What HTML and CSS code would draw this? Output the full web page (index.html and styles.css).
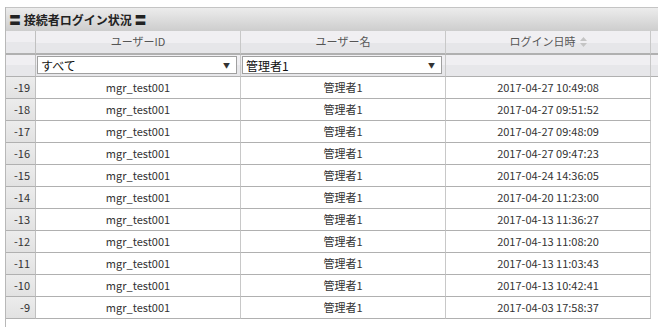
FILE: index.html
```html
<!DOCTYPE html>
<html lang="ja">
<head>
<meta charset="utf-8">
<title>接続者ログイン状況</title>
<link rel="stylesheet" href="styles.css">
</head>
<body>
<div class="panel">
  <div class="title">〓 接続者ログイン状況 〓</div>
  <div class="grid">
    <div class="hd num"></div>
    <div class="hd">ユーザーID</div>
    <div class="hd">ユーザー名</div>
    <div class="hd">ログイン日時<svg class="sort" width="7" height="10" viewBox="0 0 7 10"><path d="M3.5 0 L7 4 L0 4 Z" fill="#c4c4c4"/><path d="M0 6 L7 6 L3.5 10 Z" fill="#c4c4c4"/></svg></div>
    <div class="hd last"></div>

    <div class="ft num"></div>
    <div class="ft"><div class="sel"><span>すべて</span><span class="arr">▼</span></div></div>
    <div class="ft"><div class="sel"><span>管理者1</span><span class="arr">▼</span></div></div>
    <div class="ft"></div>
    <div class="ft last"></div>

    <div class="c num">-19</div><div class="c">mgr_test001</div><div class="c">管理者1</div><div class="c">2017-04-27 10:49:08</div><div class="c last"></div>
    <div class="c num">-18</div><div class="c">mgr_test001</div><div class="c">管理者1</div><div class="c">2017-04-27 09:51:52</div><div class="c last"></div>
    <div class="c num">-17</div><div class="c">mgr_test001</div><div class="c">管理者1</div><div class="c">2017-04-27 09:48:09</div><div class="c last"></div>
    <div class="c num">-16</div><div class="c">mgr_test001</div><div class="c">管理者1</div><div class="c">2017-04-27 09:47:23</div><div class="c last"></div>
    <div class="c num">-15</div><div class="c">mgr_test001</div><div class="c">管理者1</div><div class="c">2017-04-24 14:36:05</div><div class="c last"></div>
    <div class="c num">-14</div><div class="c">mgr_test001</div><div class="c">管理者1</div><div class="c">2017-04-20 11:23:00</div><div class="c last"></div>
    <div class="c num">-13</div><div class="c">mgr_test001</div><div class="c">管理者1</div><div class="c">2017-04-13 11:36:27</div><div class="c last"></div>
    <div class="c num">-12</div><div class="c">mgr_test001</div><div class="c">管理者1</div><div class="c">2017-04-13 11:08:20</div><div class="c last"></div>
    <div class="c num">-11</div><div class="c">mgr_test001</div><div class="c">管理者1</div><div class="c">2017-04-13 11:03:43</div><div class="c last"></div>
    <div class="c num">-10</div><div class="c">mgr_test001</div><div class="c">管理者1</div><div class="c">2017-04-13 10:42:41</div><div class="c last"></div>
    <div class="c num">-9</div><div class="c">mgr_test001</div><div class="c">管理者1</div><div class="c">2017-04-03 17:58:37</div><div class="c last"></div>
  </div>
</div>
</body>
</html>
```

FILE: styles.css
```css
html, body {
  margin: 0;
  padding: 0;
  background: #fff;
  height: 100%;
  overflow: hidden;
}
body {
  font-family: "Noto Sans CJK JP", "Noto Sans", sans-serif;
  color: #333;
  padding: 7px 0 0 5px;
  box-sizing: border-box;
}
.panel {
  border-left: 1px solid #b8b8b8;
  height: 100%;
}
.title {
  height: 24px;
  box-sizing: border-box;
  border-top: 1px solid #c4c4c4;
  background: linear-gradient(#ececec, #cdcdcd);
  font-size: 12px;
  font-weight: bold;
  color: #222;
  line-height: 23px;
  padding-left: 3px;
}
.grid {
  display: grid;
  grid-template-columns: 30px 205px 205px 205px 1fr;
}
.grid > div {
  border-right: 1px solid #c8c8c8;
  box-sizing: border-box;
  font-size: 11px;
  text-align: center;
}
.grid > .last {
  border-right: none;
}
.hd {
  height: 24px;
  line-height: 21px;
  color: #555;
  background: linear-gradient(#f0eff2 0, #f0eff2 55%, #e6e6e9 55%, #e6e6e9 100%);
  border-bottom: 2px solid #b0b0b0;
}
.sort {
  margin-left: 4px;
  vertical-align: -1px;
}
.ft {
  height: 22px;
  background: linear-gradient(#f0eff2 0, #f0eff2 50%, #e7e7ea 50%, #e7e7ea 100%);
  border-bottom: 1px solid #b0b0b0;
  padding: 1px 0 0 1px;
}
.sel {
  width: 200px;
  height: 18px;
  box-sizing: border-box;
  border: 1px solid #a0a0a0;
  background: #fff;
  display: flex;
  align-items: center;
  justify-content: space-between;
  padding: 0 6px 0 3px;
  font-size: 12px;
  color: #111;
  text-align: left;
}
.arr {
  font-size: 7px;
  color: #333;
}
.c {
  height: 22px;
  line-height: 21px;
  border-bottom: 1px solid #b0b0b0;
  background: #fff;
}
.grid > .c.last {
  border-bottom: none;
}
.grid > .num {
  text-align: right;
  padding-right: 5px;
  background: linear-gradient(#ececec, #e2e2e2);
  border-right-color: #c0c0c0;
}
.grid > .hd.num, .grid > .ft.num {
  background: linear-gradient(#f0eff2 0, #f0eff2 50%, #e7e7ea 50%, #e7e7ea 100%);
}
```
